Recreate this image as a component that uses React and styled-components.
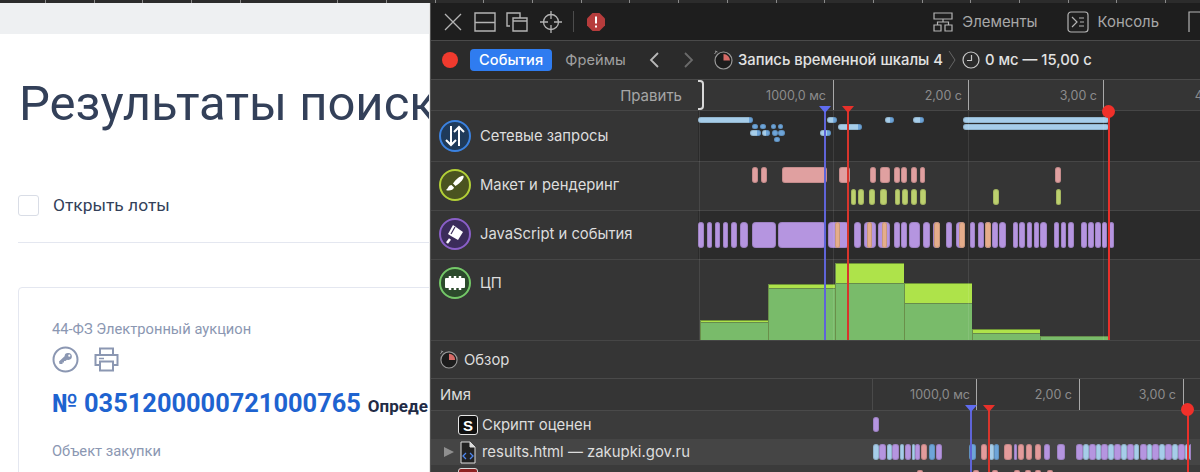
import React from 'react';
import styled, { createGlobalStyle } from 'styled-components';

const GlobalStyle = createGlobalStyle`
  html, body { margin: 0; padding: 0; background: #fff; }
  * { box-sizing: border-box; }
`;

const ORIGIN = 698;
const TOTAL_LEFT = 431;

const Screen = styled.div`
  width: 1200px;
  height: 472px;
  overflow: hidden;
  display: flex;
  flex-direction: column;
  white-space: nowrap;
`;

const TopStrip = styled.div`
  height: 3px;
  flex: none;
  background: repeating-linear-gradient(90deg, #2c2c2c 0 45px, #8a8a8a 45px 46px, #2c2c2c 46px 48.7px);
`;

const Main = styled.div`
  flex: 1;
  display: flex;
  min-height: 0;
`;

/* left: the web page */
const Page = styled.div`
  width: 430px;
  flex: none;
  overflow: hidden;
  background: #fff;
  font-family: Roboto, sans-serif;
  color: #334059;
  border-right: 1px solid #e6e6e6;
`;

const PageHead = styled.div`
  height: 31px;
  background: #eef0f2;
`;

const Title = styled.h1`
  margin: 41px 0 0 19px;
  font-size: 49px;
  line-height: 58px;
  font-weight: 400;
`;

const CheckRow = styled.label`
  display: flex;
  align-items: center;
  gap: 14px;
  margin: 61px 0 0 18px;
  font-size: 17.4px;
  height: 22px;
`;

const CheckBox = styled.span`
  width: 21px;
  height: 21px;
  border: 1px solid #d9dde6;
  border-radius: 3px;
`;

const Rule = styled.div`
  height: 1px;
  margin: 26px 0 0 18px;
  background: #e4e7f0;
`;

const Card = styled.div`
  width: 700px;
  height: 300px;
  margin: 44px 0 0 18px;
  padding: 32px 33px;
  border: 1px solid #e4e7f0;
  border-radius: 4px;
`;

const Muted = styled.div`
  font-size: 14.7px;
  line-height: 18px;
  color: #8b97b2;
`;

const ActionIcons = styled.div`
  display: flex;
  align-items: center;
  gap: 15px;
  margin-top: 8px;
  height: 27px;
`;

const NumberRow = styled.div`
  display: flex;
  align-items: baseline;
  gap: 7px;
  margin: 14px 0 23px;
`;

const Num = styled.span`
  font-size: 25.4px;
  line-height: 32px;
  font-weight: 700;
  color: #1e63d0;
`;

const Org = styled.span`
  font-size: 17px;
  font-weight: 700;
  color: #222b45;
`;

/* right: the inspector */
const Devtools = styled.div`
  flex: 1;
  min-width: 0;
  display: flex;
  flex-direction: column;
  overflow: hidden;
  background: #353535;
  border-left: 1px solid #555;
  font-family: Inter, "Noto Sans", sans-serif;
  color: #ddd;
`;

const Toolbar = styled.div`
  height: 38px;
  flex: none;
  display: flex;
  align-items: center;
  padding-left: 13px;
  background: #1e1e1e;
  border-bottom: 1px solid #4a4a4a;
`;

const ToolIcon = styled.svg`
  flex: none;
  margin-right: ${p => p.$gap || 0}px;
  color: #b4b4b4;
`;

const ToolDivider = styled.span`
  width: 1px;
  height: 21px;
  margin: 0 13px 0 11px;
  background: #4c4c4c;
`;

const TabGroup = styled.div`
  margin-left: auto;
  display: flex;
  align-items: center;
  margin-right: -8px;
`;

const Tab = styled.span`
  font-size: 14.9px;
  color: #a8a8a8;
  margin: 0 29px 0 9px;
`;

const NavBar = styled.div`
  height: 39px;
  flex: none;
  display: flex;
  align-items: center;
  padding-left: 11px;
  background: #2b2b2b;
  border-bottom: 1px solid #4a4a4a;
`;

const RecordDot = styled.span`
  width: 16px;
  height: 16px;
  border-radius: 50%;
  background: #f03a2e;
  margin-right: 12px;
`;

const Segment = styled.span`
  height: 22px;
  padding: 0 9px;
  display: flex;
  align-items: center;
  border-radius: 4px;
  font-size: 14.6px;
  letter-spacing: 0.1px;
  font-weight: ${p => (p.$active ? 500 : 400)};
  color: ${p => (p.$active ? '#fff' : '#a0a0a0')};
  background: ${p => (p.$active ? '#2f7cf0' : 'transparent')};
  margin-right: 4px;
`;

const Crumb = styled.span`
  font-size: 14.8px;
  font-weight: 500;
  color: #e2e2e2;
`;

const Timeline = styled.div`
  position: relative;
  flex: none;
`;

const Row = styled.div`
  display: flex;
  height: ${p => p.$h}px;
  border-bottom: 1px solid #464646;
`;

const Side = styled.div`
  width: 267px;
  flex: none;
  display: flex;
  align-items: center;
  gap: 9px;
  padding-left: 8px;
  font-size: 14.8px;
  background: #353535;
  padding-bottom: ${p => p.$nudge || 0}px;
`;

const EditCell = styled(Side)`
  justify-content: flex-end;
  padding-right: 16px;
  font-size: 15px;
  color: #a6a6a6;
`;

const CpuSide = styled(Side)`
  height: 80px;
  align-items: flex-start;
  padding-top: 7px;

  span + span {
    line-height: 32px;
  }
`;

const Graph = styled.div`
  position: relative;
  flex: 1;
  min-width: 0;
  background: ${p => p.$bg};
`;

const Handle = styled.span`
  position: absolute;
  left: 0;
  top: 0;
  width: 6px;
  height: 30px;
  border: 2px solid #d8d8d8;
  border-left: none;
  border-radius: 0 4px 4px 0;
`;

const TickLabel = styled.span`
  position: absolute;
  top: 8px;
  font-size: 12.5px;
  color: #8c8c8c;
  transform: translateX(-100%);
`;

const Tick = styled.span`
  position: absolute;
  top: 0;
  bottom: 0;
  width: 1px;
  background: #a8a8a8;
`;

const GridLine = styled.span`
  position: absolute;
  width: 1px;
  background: rgba(255, 255, 255, 0.09);
  pointer-events: none;
`;

const MarkerLine = styled.span`
  position: absolute;
  width: 2px;
  background: ${p => p.$color};
`;

const MarkerHead = styled.span`
  position: absolute;
  width: 0;
  height: 0;
  border-left: 6px solid transparent;
  border-right: 6px solid transparent;
  border-top: 7px solid ${p => p.$color};
`;

const EndDot = styled.span`
  position: absolute;
  width: 13px;
  height: 13px;
  border-radius: 50%;
  background: #f0302a;
`;

const Bar = styled.span`
  position: absolute;
  height: ${p => p.$h}px;
  border-radius: ${p => p.$r || 3}px;
  background: ${p => p.$color};
  box-shadow: inset 0 0 0 1px rgba(0, 0, 0, 0.12);
`;

const CpuChart = styled.div`
  position: absolute;
  left: 2px;
  bottom: 0;
  display: flex;
  align-items: flex-end;
`;

const CpuColumn = styled.div`
  display: flex;
  flex-direction: column;
  border-left: 1.5px solid #6a8f4a;
`;

const CpuIdle = styled.div`
  background: #aee34a;
  border-top: 1.5px solid #6f9437;
`;

const CpuBusy = styled.div`
  background: #79bb6a;
  border-top: 1.5px solid #668c4c;
`;

const TrackIcon = styled.span`
  width: 32px;
  height: 32px;
  flex: none;
  border-radius: 50%;
  border: 2px solid ${p => p.$ring};
  background: ${p => p.$fill};
  display: flex;
  align-items: center;
  justify-content: center;
`;

const OverviewRow = styled.div`
  height: 38px;
  flex: none;
  display: flex;
  align-items: center;
  gap: 6px;
  padding-left: 8px;
  font-size: 14.8px;
  background: #353535;
  border-bottom: 1px solid #4a4a4a;
`;

const Table = styled.div`
  position: relative;
  flex: 1;
`;

const TableRow = styled.div`
  display: flex;
  height: ${p => p.$h}px;
  background: ${p => p.$bg};
  border-bottom: ${p => (p.$line ? '1px solid #4a4a4a' : 'none')};
`;

const NameCell = styled.div`
  width: 442px;
  flex: none;
  display: flex;
  align-items: ${p => (p.$start ? 'flex-start' : 'center')};
  font-size: 14.9px;
  padding-left: ${p => p.$pad}px;
  padding-top: ${p => (p.$start ? '3px' : '0')};
  gap: 4px;
  color: #ddd;
  border-right: ${p => (p.$line ? '1px solid #4a4a4a' : 'none')};
`;

const WaterCell = styled.div`
  position: relative;
  flex: 1;
`;

const Disclosure = styled.span`
  width: 0;
  height: 0;
  border-top: 5.5px solid transparent;
  border-bottom: 5.5px solid transparent;
  border-left: 10px solid #8f8f8f;
  margin-right: 2px;
`;

const SBadge = styled.span`
  width: 20px;
  height: 20px;
  flex: none;
  display: flex;
  align-items: center;
  justify-content: center;
  border-radius: 3px;
  border: 1.5px solid #e6e6e6;
  background: #111;
  color: #fff;
  font: 700 15px "Liberation Sans", sans-serif;
`;

const RedBadge = styled.span`
  width: 20px;
  height: 20px;
  flex: none;
  border-radius: 3px;
  border: 1.5px solid #d8d8d8;
  background: #8d2222;
`;

const Spacer = styled.span`
  width: ${p => p.$w}px;
  flex: none;
`;

const tailed = 'linear-gradient(90deg, #a6cde9 calc(100% - 4px), #6ea5d9 0)';
const pale = '#a6cde9';
const deep = '#6ea5d9';
const violet = '#b595e0';
const rose = '#e39b9b';

const net = [
  [698, 753, 6, 6, tailed], [827, 837, 6, 6, tailed], [885, 894, 6, 6, tailed], [913, 924, 6, 6, tailed], [963, 1109, 6, 6],
  [838, 862, 13, 6, tailed], [963, 1109, 13, 6],
  [752, 758, 13, 5, deep], [760, 766, 13, 5, deep], [771, 776, 13, 5, deep], [778, 783, 13, 5, deep],
  [750, 761, 19, 6, tailed], [762, 770, 19, 6, tailed], [772, 778, 19, 6, deep], [778, 785, 19, 6, deep], [820, 831, 19, 6, tailed],
  [774, 780, 26, 5, deep],
];

const pink = [[752, 758], [761, 767], [782, 827], [839, 850], [870, 876], [880, 890], [894, 900], [901, 907], [911, 917], [920, 925], [1055, 1061]];
const lime = [[851, 856], [858, 864], [869, 875], [880, 887], [895, 900], [902, 908], [911, 917], [920, 926], [993, 999], [1056, 1061]];

const purple = [
  [698, 704], [707, 712], [715, 720], [723, 728], [731, 737], [740, 748], [752, 776], [778, 826], [828, 849], [854, 861],
  [864, 876], [878, 890], [894, 900], [901, 907], [909, 920], [923, 930], [933, 940], [946, 952], [956, 965], [970, 975],
  [978, 984], [985, 991], [992, 998], [999, 1006], [1013, 1018], [1019, 1025], [1027, 1032], [1034, 1039], [1040, 1047],
  [1054, 1059], [1061, 1066], [1068, 1074], [1081, 1087], [1088, 1094], [1095, 1101], [1102, 1107], [1109, 1114],
];
const orange = [[835, 840], [867, 872], [882, 887], [934, 940], [959, 965], [985, 991]];

const cpu = [
  { w: 68, idle: 2, busy: 18 },
  { w: 67, idle: 4, busy: 52 },
  { w: 69, idle: 20, busy: 57 },
  { w: 68, idle: 20, busy: 37 },
  { w: 68, idle: 4, busy: 7 },
  { w: 69, idle: 0, busy: 4 },
];

const water = [
  [874, 880, pale], [880, 887, violet], [888, 893, pale], [893, 900, violet], [901, 905, pale], [906, 912, violet],
  [913, 916, pale], [916, 921, violet], [922, 928, rose], [930, 936, deep], [937, 943, violet], [970, 977, deep],
  [982, 988, rose], [990, 995, pale], [995, 1000, deep], [1005, 1013, rose], [1015, 1018, violet], [1019, 1025, rose],
  [1027, 1033, rose], [1036, 1042, rose], [1045, 1051, violet], [1058, 1066, violet],
  ...Array.from({ length: 9 }, (_, i) => [
    [1077 + i * 12.7, 1084 + i * 12.7, violet],
    [1084 + i * 12.7, 1089.7 + i * 12.7, pale],
  ]).flat(),
  [1191, 1192, violet],
];

const pos = (a, b) => ({ left: a - ORIGIN, width: b - a });

function CloseIcon() {
  return (
    <ToolIcon width="18" height="18" viewBox="0 0 18 18" $gap={12}>
      <path d="M1 1l16 16M17 1L1 17" stroke="currentColor" strokeWidth="1.3" fill="none" />
    </ToolIcon>
  );
}

function SplitIcon() {
  return (
    <ToolIcon width="22" height="20" viewBox="0 0 22 20" $gap={10}>
      <path d="M1 1h20v18H1zM1 10.5h20" stroke="currentColor" strokeWidth="1.4" fill="none" />
    </ToolIcon>
  );
}

function UndockIcon() {
  return (
    <ToolIcon width="22" height="20" viewBox="0 0 22 20" $gap={12}>
      <path d="M7 6h14v13H7zM7 9h14" stroke="currentColor" strokeWidth="1.4" fill="none" />
      <path d="M4 14H1V1h13v5" stroke="currentColor" strokeWidth="1.4" fill="none" />
    </ToolIcon>
  );
}

function TargetIcon() {
  return (
    <ToolIcon width="22" height="22" viewBox="0 0 22 22">
      <circle cx="11" cy="11" r="7.5" stroke="currentColor" strokeWidth="1.3" fill="none" />
      <path d="M11 0v8M11 14v8M0 11h8M14 11h8" stroke="currentColor" strokeWidth="1.3" />
    </ToolIcon>
  );
}

function ErrorIcon() {
  return (
    <ToolIcon width="18" height="18" viewBox="0 0 18 18">
      <path d="M5.5 0h7L18 5.5v7L12.500 18h-7L0 12.500v-7z" fill="#b63c3c" />
      <path d="M9 3.500v7M9 12.500v2" stroke="#fff" strokeWidth="2" />
    </ToolIcon>
  );
}

function ElementsIcon() {
  return (
    <ToolIcon width="20" height="20" viewBox="0 0 20 20">
      <path d="M1 1h18v6H1zM1 13h7v6H1zM12 13h7v6h-7zM10 7v3M4.500 13v-3h11v3" stroke="currentColor" strokeWidth="1.2" fill="none" />
    </ToolIcon>
  );
}

function ConsoleIcon() {
  return (
    <ToolIcon width="22" height="22" viewBox="0 0 22 22">
      <rect x="1" y="1" width="20" height="20" rx="3" stroke="currentColor" strokeWidth="1.2" fill="none" />
      <path d="M5 6l5 5-5 5M12 7h5M13 11h4M12 15h5" stroke="currentColor" strokeWidth="1.2" fill="none" />
    </ToolIcon>
  );
}

function SourcesIcon() {
  return (
    <ToolIcon width="20" height="22" viewBox="0 0 20 22">
      <path d="M1 21V1h11l7 7v13" stroke="currentColor" strokeWidth="1.2" fill="none" />
    </ToolIcon>
  );
}

function Chevron({ back, dim }) {
  return (
    <svg width="10" height="16" viewBox="0 0 10 16" opacity={dim ? 0.45 : 1}>
      <path d={back ? 'M9 1L2 8l7 7' : 'M1 1l7 7-7 7'} stroke="#b8b8b8" strokeWidth="1.8" fill="none" />
    </svg>
  );
}

function RecordingIcon({ size }) {
  return (
    <svg width={size} height={size} viewBox="0 0 20 20">
      <circle cx="10.500" cy="10.500" r="8.500" fill="#1c1c1c" stroke="#9a9a9a" strokeWidth="1.200" />
      <path d="M10.500 4a6.500 6.500 0 0 1 6.500 6.500h-6.500z" fill="#d66a66" />
      <path d="M1.500 4l2-2.500M2 1l2.500 1" stroke="#9a9a9a" strokeWidth="1" fill="none" />
    </svg>
  );
}

function ClockIcon() {
  return (
    <svg width="18" height="18" viewBox="0 0 18 18">
      <circle cx="9" cy="9" r="8" stroke="#c8c8c8" strokeWidth="1.200" fill="none" />
      <path d="M9.500 4v5.500H5" stroke="#c8c8c8" strokeWidth="1.200" fill="none" />
    </svg>
  );
}

function CrumbArrow() {
  return (
    <svg width="8" height="20" viewBox="0 0 8 20">
      <path d="M1 1l6 9-6 9" stroke="#666" strokeWidth="1" fill="none" />
    </svg>
  );
}

function FileIcon() {
  return (
    <svg width="18" height="23" viewBox="0 0 18 23">
      <path d="M1 1h9l5 5v16H1z" fill="#222" stroke="#dcdcdc" strokeWidth="1" />
      <path d="M10 1v5h5" fill="#dcdcdc" stroke="#dcdcdc" strokeWidth="1" />
      <path d="M6 12l-3 3 3 3M10 12l3 3-3 3" stroke="#4d86f0" strokeWidth="1.300" fill="none" />
    </svg>
  );
}

function Ruler({ ticks, top }) {
  return ticks.map(([x, label, end]) => (
    <React.Fragment key={x}>
      <Tick style={{ left: x - top }} />
      <TickLabel style={{ left: end - top }}>{label}</TickLabel>
    </React.Fragment>
  ));
}

export default function App() {
  return (
    <Screen>
      <GlobalStyle />
      <TopStrip />
      <Main>
        <Page>
          <PageHead />
          <Title>Результаты поиска</Title>
          <CheckRow>
            <CheckBox />
            Открыть лоты
          </CheckRow>
          <Rule />
          <Card>
            <Muted>44-ФЗ Электронный аукцион</Muted>
            <ActionIcons>
              <svg width="27" height="27" viewBox="0 0 27 27">
                <circle cx="13.500" cy="13.500" r="12" stroke="#8b97b2" strokeWidth="2" fill="none" />
                <path d="M16.500 7a3.500 3.500 0 1 1-1.500 6.700l-1.500 1.300h-1.500v1.500h-1.500v1.500h-3l-.5-2.500 5.600-5.300A3.500 3.500 0 0 1 16.500 7z" fill="#8b97b2" />
                <circle cx="17.300" cy="9.700" r="1.100" fill="#fff" />
              </svg>
              <svg width="25" height="25" viewBox="0 0 25 25">
                <path d="M6 8V1.500h13V8M6 18H1.500V8h22v10H19M6 14.500h13v9H6z" stroke="#8b97b2" strokeWidth="2" fill="none" />
                <path d="M5 11.500h5" stroke="#8b97b2" strokeWidth="1.500" />
              </svg>
            </ActionIcons>
            <NumberRow>
              <Num>№ 0351200000721000765</Num>
              <Org>Опреде</Org>
            </NumberRow>
            <Muted>Объект закупки</Muted>
          </Card>
        </Page>
        <Devtools>
          <Toolbar>
            <CloseIcon />
            <SplitIcon />
            <UndockIcon />
            <TargetIcon />
            <ToolDivider />
            <ErrorIcon />
            <TabGroup>
              <ElementsIcon />
              <Tab>Элементы</Tab>
              <ConsoleIcon />
              <Tab>Консоль</Tab>
              <SourcesIcon />
            </TabGroup>
          </Toolbar>
          <NavBar>
            <RecordDot />
            <Segment $active>События</Segment>
            <Segment>Фреймы</Segment>
            <Spacer $w={10} />
            <Chevron back />
            <Spacer $w={25} />
            <Chevron dim />
            <Spacer $w={19} />
            <RecordingIcon size={20} />
            <Spacer $w={5} />
            <Crumb>Запись временной шкалы 4</Crumb>
            <Spacer $w={5} />
            <CrumbArrow />
            <Spacer $w={6} />
            <ClockIcon />
            <Spacer $w={5} />
            <Crumb>0 мс — 15,00 с</Crumb>
          </NavBar>
          <Timeline>
            <Row $h={31}>
              <EditCell>Править</EditCell>
              <Graph $bg="#353535">
                <Handle />
                <Ruler
                  top={ORIGIN}
                  ticks={[[833, '1000,0 мс', 826], [968, '2,00 с', 962], [1103, '3,00 с', 1097], [1238, '4,00 с', 1232]]}
                />
              </Graph>
            </Row>
            <Row $h={51}>
              <Side>
                <TrackIcon $ring="#3b82e0" $fill="#1f3a5a">
                  <svg width="22" height="24" viewBox="0 0 22 24">
                    <path d="M7 2v19M2 16l5 5 5-5M15 22V3M10 8l5-5 5 5" stroke="#fff" strokeWidth="2" fill="none" />
                  </svg>
                </TrackIcon>
                Сетевые запросы
              </Side>
              <Graph $bg="#2b2b2b">
                {net.map(([a, b, t, h, c], i) => (
                  <Bar key={i} $h={h} $color={c || pale} style={{ ...pos(a, b), top: t }} />
                ))}
              </Graph>
            </Row>
            <Row $h={49}>
              <Side $nudge={2}>
                <TrackIcon $ring="#b3d037" $fill="#4a5320">
                  <svg width="22" height="22" viewBox="0 0 22 22">
                    <path d="M19.500 2c1 2-3 7-8 10l-2.500-2.500C12 5 17.500 1 19.500 2z" fill="#fff" />
                    <path d="M7.500 11c-3 0-3 3-5.500 5 3 1.500 7.500 0 8-2.500z" fill="#fff" />
                  </svg>
                </TrackIcon>
                Макет и рендеринг
              </Side>
              <Graph $bg="#353535">
                {pink.map(([a, b]) => (
                  <Bar key={a} $h={16} $color="#e0a0a0" style={{ ...pos(a, b), top: 5 }} />
                ))}
                {lime.map(([a, b]) => (
                  <Bar key={a} $h={16} $color="#bcd06e" style={{ ...pos(a, b), top: 27 }} />
                ))}
              </Graph>
            </Row>
            <Row $h={49}>
              <Side $nudge={2}>
                <TrackIcon $ring="#8a5fc8" $fill="#3b2c5a">
                  <svg width="22" height="22" viewBox="0 0 22 22">
                    <path d="M9 2l10 7-5 8-7-4-3-2z" fill="#fff" />
                    <path d="M6 16l-3 4" stroke="#fff" strokeWidth="2.500" />
                    <path d="M7 11l4-7" stroke="#3b2c5a" strokeWidth="1.200" />
                  </svg>
                </TrackIcon>
                JavaScript и события
              </Side>
              <Graph $bg="#2b2b2b">
                {purple.map(([a, b]) => (
                  <Bar key={a} $h={26} $r={4} $color={violet} style={{ ...pos(a, b), top: 11 }} />
                ))}
                {orange.map(([a, b]) => (
                  <Bar key={a} $h={26} $r={3} $color="#e5ad8b" style={{ ...pos(a, b), top: 11 }} />
                ))}
              </Graph>
            </Row>
            <Row $h={81}>
              <CpuSide>
                <TrackIcon $ring="#74c868" $fill="#2c4a2c">
                  <svg width="24" height="20" viewBox="0 0 24 20">
                    <rect x="2" y="5" width="20" height="10" rx="1" fill="#fff" />
                    <path d="M7 3v14M12 3v14M17 3v14" stroke="#fff" strokeWidth="2.500" strokeDasharray="2.500 9" />
                  </svg>
                </TrackIcon>
                <span>ЦП</span>
              </CpuSide>
              <Graph $bg="#353535">
                <CpuChart>
                  {cpu.map((c, i) => (
                    <CpuColumn key={i} style={{ width: c.w }}>
                      {c.idle > 0 && <CpuIdle style={{ height: c.idle }} />}
                      <CpuBusy style={{ height: c.busy }} />
                    </CpuColumn>
                  ))}
                </CpuChart>
              </Graph>
            </Row>
            {[699, 833, 968, 1103].map(x => (
              <GridLine key={x} style={{ left: x - TOTAL_LEFT, top: 31, bottom: 1 }} />
            ))}
            <MarkerLine $color="#5f64d8" style={{ left: 824 - TOTAL_LEFT, top: 31, bottom: 1 }} />
            <MarkerHead $color="#5f6cf0" style={{ left: 819 - TOTAL_LEFT, top: 26 }} />
            <MarkerLine $color="#d8352c" style={{ left: 847 - TOTAL_LEFT, top: 31, bottom: 1 }} />
            <MarkerHead $color="#e8302a" style={{ left: 842 - TOTAL_LEFT, top: 26 }} />
            <MarkerLine $color="#e8302a" style={{ left: 1108 - TOTAL_LEFT, top: 31, bottom: 1 }} />
            <EndDot style={{ left: 1102 - TOTAL_LEFT, top: 25 }} />
          </Timeline>
          <OverviewRow>
            <RecordingIcon size={19} />
            Обзор
          </OverviewRow>
          <Table>
            <TableRow $h={32} $bg="#353535" $line>
              <NameCell $pad={9} $line>Имя</NameCell>
              <WaterCell>
                <Ruler
                  top={874}
                  ticks={[[977, '1000,0 мс', 971], [1080, '2,00 с', 1073], [1184, '3,00 с', 1177]]}
                />
              </WaterCell>
            </TableRow>
            <TableRow $h={28} $bg="#3b3b3b">
              <NameCell $pad={27}>
                <SBadge>S</SBadge>
                Скрипт оценен
              </NameCell>
              <WaterCell>
                <Bar $h={15} $r={3} $color={violet} style={{ left: 0, width: 6, top: 6 }} />
              </WaterCell>
            </TableRow>
            <TableRow $h={26} $bg="#454545">
              <NameCell $pad={13}>
                <Disclosure />
                <FileIcon />
                results.html — zakupki.gov.ru
              </NameCell>
              <WaterCell>
                {water.map(([a, b, c], i) => (
                  <Bar key={i} $h={16} $color={c} style={{ left: a - 874, width: b - a, top: 5 }} />
                ))}
              </WaterCell>
            </TableRow>
            <TableRow $h={10} $bg="#3b3b3b">
              <NameCell $pad={27} $start>
                <RedBadge />
              </NameCell>
              <WaterCell>
                {[918, 974, 993, 1015, 1026, 1036, 1048].map(x => (
                  <Bar key={x} $h={4} $color={rose} style={{ left: x - 874, width: 6, top: 5 }} />
                ))}
              </WaterCell>
            </TableRow>
            <MarkerLine $color="#5f64d8" style={{ left: 970 - TOTAL_LEFT, top: 32, bottom: 0 }} />
            <MarkerHead $color="#5f6cf0" style={{ left: 965 - TOTAL_LEFT, top: 26 }} />
            <MarkerLine $color="#d8352c" style={{ left: 988 - TOTAL_LEFT, top: 32, bottom: 0 }} />
            <MarkerHead $color="#e8302a" style={{ left: 983 - TOTAL_LEFT, top: 26 }} />
            <MarkerLine $color="#e8302a" style={{ left: 1187 - TOTAL_LEFT, top: 32, bottom: 0 }} />
            <EndDot style={{ left: 1181 - TOTAL_LEFT, top: 24 }} />
          </Table>
        </Devtools>
      </Main>
    </Screen>
  );
}
